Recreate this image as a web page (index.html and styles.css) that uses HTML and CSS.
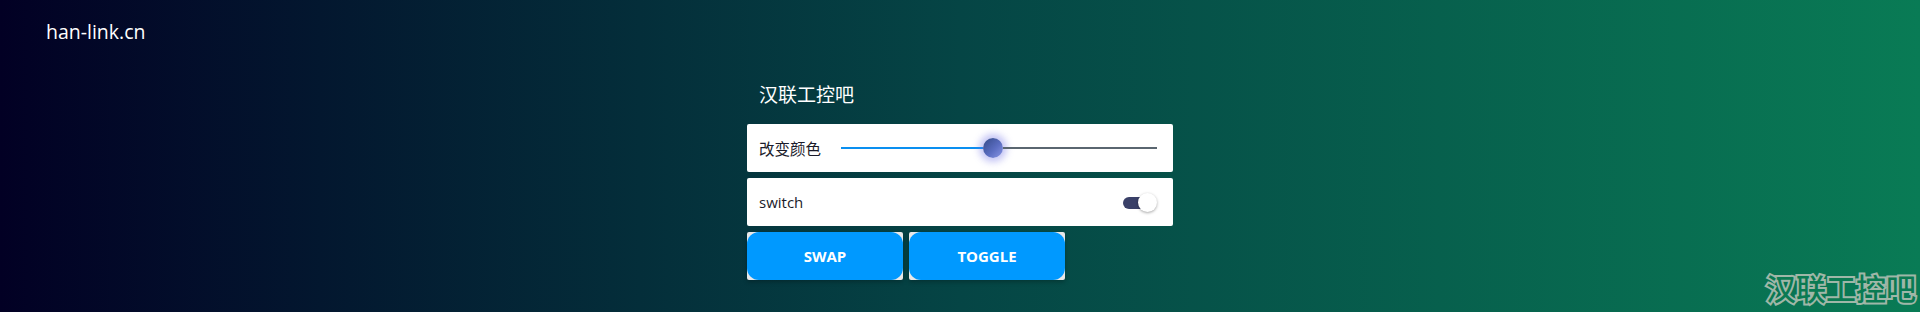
FILE: index.html
```html
<!DOCTYPE html>
<html lang="zh-CN">
<head>
    <meta charset="UTF-8">
    <meta name="viewport" content="width=device-width, initial-scale=1.0">
    <title>han-link.cn</title>
    <link rel="stylesheet" href="styles.css">
</head>
<body>
    <header class="site-name">han-link.cn</header>

    <div class="panel">
        <h1 class="panel-title">汉联工控吧</h1>

        <div class="card">
            <span class="card-label">改变颜色</span>
            <div class="slider">
                <div class="slider-fill"></div>
                <div class="slider-thumb"></div>
                <div class="slider-rest"></div>
            </div>
        </div>

        <div class="card">
            <span class="card-label switch-label">switch</span>
            <div class="toggle">
                <div class="toggle-track"></div>
                <div class="toggle-knob"></div>
            </div>
        </div>

        <div class="buttons">
            <div class="btn-wrap"><button class="btn">SWAP</button></div>
            <div class="btn-wrap"><button class="btn">TOGGLE</button></div>
        </div>
    </div>

    <div class="watermark">汉联工控吧</div>
</body>
</html>
```

FILE: styles.css
```css
* {
    margin: 0;
    padding: 0;
    box-sizing: border-box;
}

body {
    width: 1920px;
    height: 312px;
    overflow: hidden;
    background: linear-gradient(90deg, #020024 0%, #054545 50%, #097b55 100%);
    font-family: 'Open Sans', 'Noto Sans CJK SC', sans-serif;
    color: white;
    position: relative;
}

.site-name {
    font-size: 19.5px;
    padding: 19px 0 0 46px;
    line-height: 26px;
    height: 46px;
}

.panel {
    width: 426px;
    margin: 0 auto;
    display: flex;
    flex-direction: column;
    gap: 6px;
}

.panel-title {
    font-family: 'Noto Sans CJK SC', sans-serif;
    font-size: 19px;
    font-weight: 400;
    line-height: 28px;
    padding: 34px 0 10px 12px;
    height: 72px;
    display: flex;
    align-items: center;
}

.card {
    background: white;
    border-radius: 2px;
    height: 48px;
    display: flex;
    align-items: center;
    padding: 0 16px 0 12px;
    color: #1b1b2a;
}

.card-label {
    font-family: 'Noto Sans CJK SC', sans-serif;
    font-size: 15.5px;
    white-space: nowrap;
}

.switch-label {
    font-family: 'Open Sans', sans-serif;
    font-size: 15px;
    flex: 1;
}

.slider {
    flex: 1;
    margin-left: 20px;
    display: flex;
    align-items: center;
    height: 24px;
}

.slider-fill {
    width: 142px;
    height: 2px;
    background: #0a8ff0;
}

.slider-rest {
    flex: 1;
    height: 2px;
    background: #5a6670;
}

.slider-thumb {
    width: 20px;
    height: 20px;
    border-radius: 50%;
    flex-shrink: 0;
    background: linear-gradient(135deg, #344a88 0%, #5a6cc0 55%, #8a96e6 100%);
    box-shadow: 0 0 7px 4px rgba(110, 110, 230, 0.4);
}

.toggle {
    position: relative;
    width: 34px;
    height: 20px;
}

.toggle-track {
    position: absolute;
    left: 0;
    top: 5px;
    width: 30px;
    height: 12px;
    border-radius: 6px;
    background: #3a4068;
}

.toggle-knob {
    position: absolute;
    right: 0;
    top: 1px;
    width: 19px;
    height: 19px;
    border-radius: 50%;
    background: white;
    box-shadow: 0 1px 3px rgba(0, 0, 0, 0.35);
}

.buttons {
    display: flex;
    gap: 6px;
}

.btn-wrap {
    width: 156px;
    height: 48px;
    background: #e8e8e8;
    border-radius: 2px;
    box-shadow: 0 2px 4px rgba(0, 0, 0, 0.25);
}

.btn {
    width: 100%;
    height: 100%;
    border: none;
    border-radius: 12px;
    background: #0099ff;
    color: white;
    font-family: 'Open Sans', sans-serif;
    font-weight: 700;
    font-size: 15px;
    cursor: pointer;
}

.watermark {
    position: absolute;
    right: 4px;
    bottom: 5px;
    font-family: 'Noto Sans CJK SC', sans-serif;
    font-size: 30px;
    font-weight: 500;
    line-height: 40px;
    color: #0a7a52;
    -webkit-text-stroke: 4px #9fb7a8;
    paint-order: stroke fill;
}
```
